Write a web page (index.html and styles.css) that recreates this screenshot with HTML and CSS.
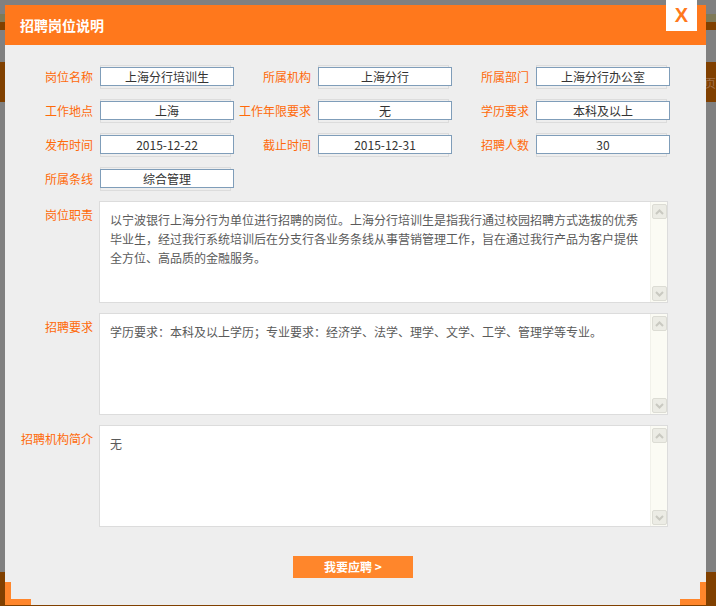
FILE: index.html
```html
<!DOCTYPE html>
<html lang="zh-CN">
<head>
<meta charset="utf-8">
<title>招聘岗位说明</title>
<link rel="stylesheet" href="styles.css">
</head>
<body>
<div class="page">
  <div class="bg-strip-a"></div>
  <div class="bg-strip-b"></div>
  <div class="bg-band"><span class="bg-tab">页</span></div>
  <div class="bg-fill"></div>
  <div class="bg-footer"></div>
</div>

<div class="modal">
  <div class="modal-head"><h1 class="modal-title">招聘岗位说明</h1></div>
  <a class="modal-close">X</a>

  <div class="modal-body">
    <div class="fields">
      <div class="f-label">岗位名称</div><div class="f-val"><div class="f-box">上海分行培训生</div></div>
      <div class="f-label">所属机构</div><div class="f-val"><div class="f-box">上海分行</div></div>
      <div class="f-label">所属部门</div><div class="f-val"><div class="f-box">上海分行办公室</div></div>

      <div class="f-label">工作地点</div><div class="f-val"><div class="f-box">上海</div></div>
      <div class="f-label">工作年限要求</div><div class="f-val"><div class="f-box">无</div></div>
      <div class="f-label">学历要求</div><div class="f-val"><div class="f-box">本科及以上</div></div>

      <div class="f-label">发布时间</div><div class="f-val"><div class="f-box">2015-12-22</div></div>
      <div class="f-label">截止时间</div><div class="f-val"><div class="f-box">2015-12-31</div></div>
      <div class="f-label">招聘人数</div><div class="f-val"><div class="f-box">30</div></div>

      <div class="f-label">所属条线</div><div class="f-val"><div class="f-box">综合管理</div></div>
    </div>

    <div class="area-row">
      <div class="a-label">岗位职责</div>
      <div class="a-box">
        <div class="a-text">以宁波银行上海分行为单位进行招聘的岗位。上海分行培训生是指我行通过校园招聘方式选拔的优秀毕业生，经过我行系统培训后在分支行各业务条线从事营销管理工作，旨在通过我行产品为客户提供全方位、高品质的金融服务。</div>
        <div class="sb">
          <span class="sb-btn"><svg width="9" height="6" viewBox="0 0 9 6"><path d="M1 5 L4.5 1.5 L8 5" fill="none" stroke="#c9c9c1" stroke-width="2"/></svg></span>
          <span class="sb-track"></span>
          <span class="sb-btn"><svg width="9" height="6" viewBox="0 0 9 6"><path d="M1 1 L4.5 4.5 L8 1" fill="none" stroke="#c9c9c1" stroke-width="2"/></svg></span>
        </div>
      </div>
    </div>

    <div class="area-row">
      <div class="a-label">招聘要求</div>
      <div class="a-box">
        <div class="a-text">学历要求：本科及以上学历；专业要求：经济学、法学、理学、文学、工学、管理学等专业。</div>
        <div class="sb">
          <span class="sb-btn"><svg width="9" height="6" viewBox="0 0 9 6"><path d="M1 5 L4.5 1.5 L8 5" fill="none" stroke="#c9c9c1" stroke-width="2"/></svg></span>
          <span class="sb-track"></span>
          <span class="sb-btn"><svg width="9" height="6" viewBox="0 0 9 6"><path d="M1 1 L4.5 4.5 L8 1" fill="none" stroke="#c9c9c1" stroke-width="2"/></svg></span>
        </div>
      </div>
    </div>

    <div class="area-row">
      <div class="a-label">招聘机构简介</div>
      <div class="a-box">
        <div class="a-text">无</div>
        <div class="sb">
          <span class="sb-btn"><svg width="9" height="6" viewBox="0 0 9 6"><path d="M1 5 L4.5 1.5 L8 5" fill="none" stroke="#c9c9c1" stroke-width="2"/></svg></span>
          <span class="sb-track"></span>
          <span class="sb-btn"><svg width="9" height="6" viewBox="0 0 9 6"><path d="M1 1 L4.5 4.5 L8 1" fill="none" stroke="#c9c9c1" stroke-width="2"/></svg></span>
        </div>
      </div>
    </div>

    <div class="actions">
      <button class="apply-btn" type="button">我要应聘 &gt;</button>
    </div>
  </div>

  <span class="corner corner-bl"></span>
  <span class="corner corner-br"></span>
</div>
</body>
</html>
```

FILE: styles.css
```css
* { box-sizing: border-box; }

html, body {
  margin: 0;
  padding: 0;
  height: 100%;
  overflow: hidden;
}

body {
  background: #808080;
  font-family: "Noto Sans CJK SC", "Liberation Sans", sans-serif;
  font-size: 12px;
  position: relative;
}

/* dimmed page behind the dialog */
.page {
  display: flex;
  flex-direction: column;
  height: 606px;
  padding-top: 14px;
}
.bg-strip-a { height: 8px; background: #7f7a58; }
.bg-strip-b { height: 8px; background: #804000; }
.bg-band {
  margin-top: 32px;
  height: 40px;
  background: #804000;
  display: flex;
  justify-content: flex-end;
  align-items: center;
}
.bg-tab {
  color: #a0714a;
  font-size: 12px;
  margin-right: 0;
}
.bg-fill { flex: 1; }
.bg-footer { height: 34px; background: #804000; }

/* dialog */
.modal {
  position: absolute;
  left: 5px;
  top: 5px;
  width: 701px;
  height: 600px;
  background: #eeeeee;
}

.modal-head {
  height: 40px;
  background: #ff781c;
  padding-left: 15px;
}
.modal-title {
  margin: 0;
  color: #ffffff;
  font-size: 14px;
  font-weight: bold;
  line-height: 41px;
}

.modal-close {
  position: absolute;
  top: -5px;
  right: 9px;
  width: 31px;
  height: 31px;
  background: #ffffff;
  color: #ff781c;
  font-family: "Liberation Sans", Arial, sans-serif;
  font-weight: bold;
  font-size: 20px;
  line-height: 31px;
  text-align: center;
}

.modal-body {
  padding: 20px 0 0 11px;
}

.fields {
  display: grid;
  grid-template-columns: 84px 134px 84px 134px 84px 134px;
  grid-auto-rows: 24px;
  row-gap: 10px;
}

.f-label {
  color: #ff6a0a;
  text-align: right;
  padding-right: 7px;
  line-height: 24px;
  white-space: nowrap;
}

.f-val {
  width: 131px;
  height: 24px;
  border: 1px solid #dcdcdc;
}

.f-box {
  margin: 1px 0 0 -1px;
  width: 134px;
  height: 19px;
  border: 1px solid #7f9db9;
  background: #ffffff;
  color: #333333;
  text-align: center;
  line-height: 17px;
  white-space: nowrap;
}

.area-row {
  display: grid;
  grid-template-columns: 84px 568px;
  margin-top: 10px;
}

.a-label {
  color: #ff6a0a;
  text-align: right;
  padding: 5px 7px 0 0;
  line-height: 18px;
  white-space: nowrap;
}

.a-box {
  margin-left: -1px;
  height: 102px;
  border: 1px solid #dcdcdc;
  background: #ffffff;
  display: flex;
}

.a-text {
  flex: 1;
  padding: 8px 8px 0 10px;
  color: #5a5a5a;
  line-height: 19px;
}

.sb {
  width: 17px;
  background: #fbfbf4;
  border-left: 1px solid #f1f1ea;
  display: flex;
  flex-direction: column;
  align-items: center;
  padding: 2px 0 1px;
}
.sb-btn {
  width: 15px;
  height: 15px;
  background: #ecece5;
  border: 1px solid #dcdcd4;
  border-radius: 2px;
  display: flex;
  align-items: center;
  justify-content: center;
}
.sb-track { flex: 1; }

.actions {
  display: flex;
  justify-content: center;
  padding: 29px 16px 0 0;
}

.apply-btn {
  width: 120px;
  height: 22px;
  border: 0;
  padding: 0;
  background: #ff862b;
  color: #ffffff;
  font-family: "Noto Sans CJK SC", "Liberation Sans", sans-serif;
  font-size: 12px;
  font-weight: bold;
  line-height: 22px;
}

.corner {
  position: absolute;
  bottom: 0;
  width: 26px;
  height: 23px;
  border-bottom: 6px solid #ff862b;
}
.corner-bl { left: 0; border-left: 6px solid #ff862b; }
.corner-br { right: 0; border-right: 6px solid #ff862b; }
```
